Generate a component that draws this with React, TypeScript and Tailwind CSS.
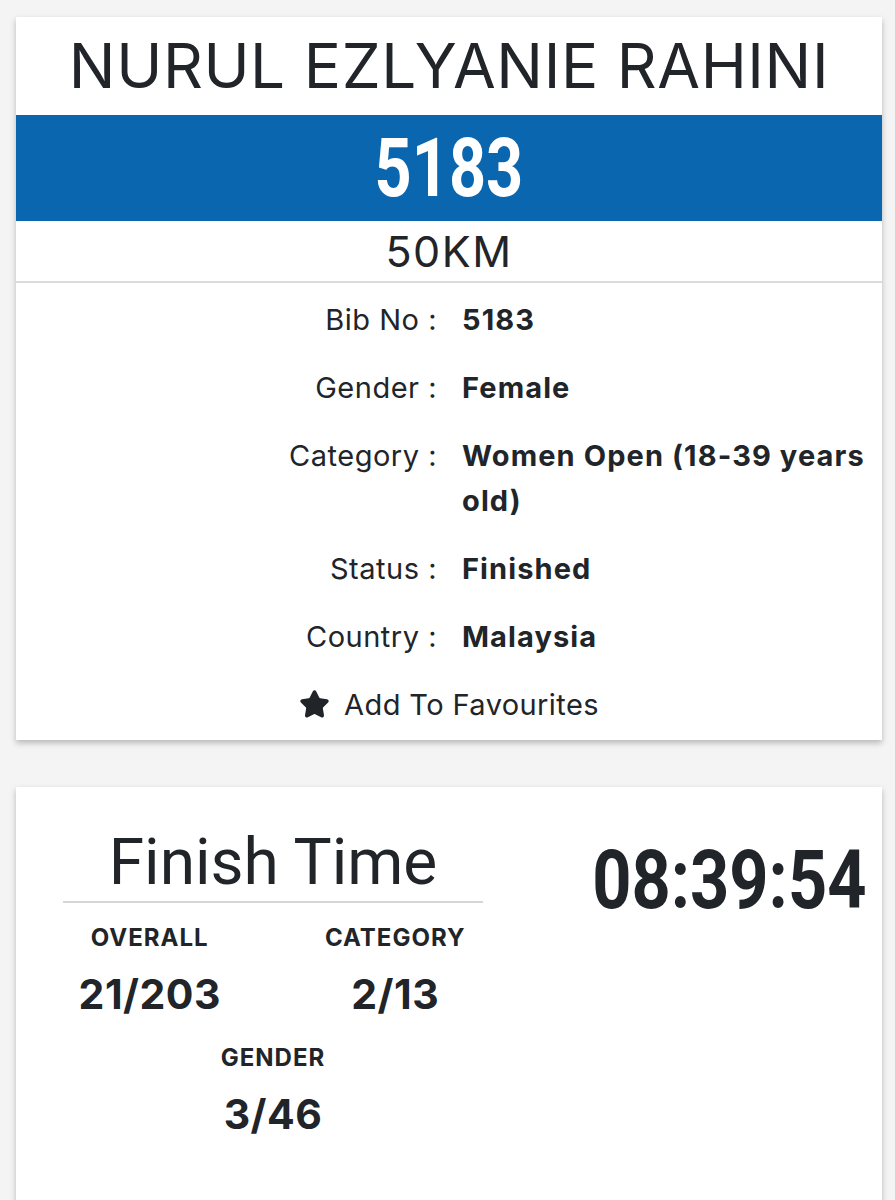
import { Star } from 'lucide-react';

const rows: { label: string; value: string }[] = [
  { label: 'Bib No', value: '5183' },
  { label: 'Gender', value: 'Female' },
  { label: 'Category', value: 'Women Open (18-39 years old)' },
  { label: 'Status', value: 'Finished' },
  { label: 'Country', value: 'Malaysia' },
];

function Rank({ label, value }: { label: string; value: string }) {
  return (
    <div className="flex flex-col items-center">
      <div className="text-[24px] font-bold leading-[30px] tracking-[1px]">{label}</div>
      <div className="mt-[15px] text-[41px] font-bold leading-[52px] tracking-[0.5px]">{value}</div>
    </div>
  );
}

export default function App() {
  return (
    <div
      className="h-[1200px] overflow-hidden bg-[#f4f4f4] pt-[17px] pr-[13px] pl-[16px] text-[#212529]"
      style={{ fontFamily: 'Inter, "Liberation Sans", sans-serif' }}
    >
      <div className="bg-white shadow-[0_3px_6px_rgba(0,0,0,0.25)]">
        <div className="flex h-[98px] items-center justify-center text-[62px] leading-none tracking-[0.6px]">
          NURUL EZLYANIE RAHINI
        </div>
        <div className="flex h-[106px] items-center justify-center bg-[#0a67af]">
          <span
            className="inline-block scale-x-[0.8] text-[81px] font-bold leading-none text-white"
            style={{ fontFamily: 'Roboto, sans-serif' }}
          >
            5183
          </span>
        </div>
        <div className="flex h-[62px] items-center justify-center border-b-2 border-[#dcdcdc] text-[43px] leading-none tracking-[1.5px]">
          50KM
        </div>
        <div className="flex flex-col gap-[23px] pt-[14px] pb-[13px] text-[29px] leading-[45px]">
          {rows.map((r) => (
            <div key={r.label} className="flex">
              <div className="w-1/2 pr-[12px] text-right tracking-[0.5px]">{r.label} :</div>
              <div className="w-1/2 pl-[13px] pr-[10px] font-bold tracking-[1.1px]">{r.value}</div>
            </div>
          ))}
          <div className="flex items-center justify-center gap-[14px]">
            <Star className="h-[31px] w-[31px] fill-[#212529] text-[#212529]" strokeWidth={2} />
            <span className="tracking-[0.4px]">Add To Favourites</span>
          </div>
        </div>
      </div>

      <div className="mt-[47px] flex h-[460px] bg-white shadow-[0_3px_6px_rgba(0,0,0,0.25)]">
        <div className="w-[514px] pt-[44px]">
          <div
            className="mx-[47px] border-b-2 border-[#d6d6d6] pb-[6px] text-center text-[64px] leading-[64px]"
            style={{ fontFamily: 'Roboto, sans-serif' }}
          >
            Finish Time
          </div>
          <div className="mt-[20px] grid grid-cols-2 pl-[11px] pr-[12px]">
            <Rank label="OVERALL" value="21/203" />
            <Rank label="CATEGORY" value="2/13" />
          </div>
          <div className="mt-[23px]">
            <Rank label="GENDER" value="3/46" />
          </div>
        </div>
        <div className="flex flex-1 justify-end pt-[52px] pr-[16px]">
          <span
            className="inline-block h-fit origin-right scale-x-[0.835] text-[82px] font-bold leading-none"
            style={{ fontFamily: 'Roboto, sans-serif' }}
          >
            08:39:54
          </span>
        </div>
      </div>
    </div>
  );
}
